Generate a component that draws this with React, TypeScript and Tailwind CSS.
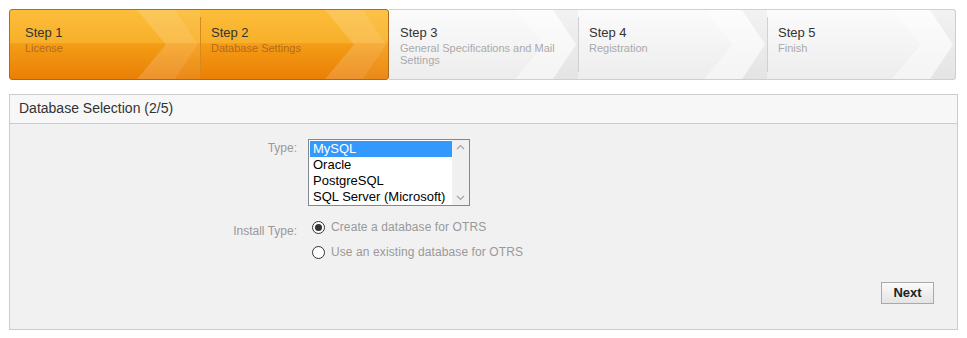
import React from "react";

const font = { fontFamily: '"Liberation Sans", Arial, sans-serif' };

function Chevrons({ orange }: { orange: boolean }) {
  return (
    <svg
      className="absolute right-0 top-0 h-full w-[63px]"
      viewBox="0 0 63 69"
      preserveAspectRatio="none"
    >
      <polygon
        points="0,0 38,0 61,34.5 38,69 0,69 29,34.5"
        fill={orange ? "rgba(255,255,255,0.16)" : "rgba(255,255,255,0.4)"}
      />
      <polygon
        points="38,0 63,0 63,69 38,69 61,34.5"
        fill={orange ? "rgba(255,255,255,0.08)" : "rgba(0,0,0,0.035)"}
      />
    </svg>
  );
}

function Step({
  n,
  label,
  orange,
  divider,
  pl,
  w,
}: {
  n: number;
  label: string;
  orange: boolean;
  divider: boolean;
  pl: string;
  w: string;
}) {
  return (
    <div className={`relative flex h-full ${w}`}>
      {divider && (
        <div
          className={`mt-[7px] h-[55px] w-px shrink-0 ${orange ? "bg-[#d8891e]" : "bg-[#d0d0d0]"}`}
        />
      )}
      <div className={`relative flex-1 overflow-hidden ${pl} pt-[15px]`}>
        <Chevrons orange={orange} />
        <div className="relative">
          <div className="text-[13px] leading-[16px] text-[#333]">Step {n}</div>
          <div
            className={`mt-px text-[11px] leading-[12px] ${orange ? "text-[#b8691a]" : "text-[#aaa]"}`}
          >
            {label}
          </div>
        </div>
      </div>
    </div>
  );
}

export default function App() {
  return (
    <div className="h-[338px] w-[967px] bg-white" style={font}>
      <div className="ml-[9px] flex h-[71px] w-[947px] translate-y-[9px]">
        <div className="flex h-[71px] w-[380px] overflow-hidden rounded-[3px] border border-[#b06a1e] bg-[linear-gradient(to_bottom,#fcbd3a_0%,#f8b02a_47%,#f49d16_49%,#ea7f05_100%)]">
          <Step n={1} label="License" orange divider={false} pl="pl-[15px]" w="w-[190px]" />
          <Step n={2} label="Database Settings" orange divider pl="pl-[10px]" w="w-[188px]" />
        </div>
        <div className="flex h-[71px] w-[567px] overflow-hidden rounded-r-[3px] border border-l-0 border-[#cfcfcf] bg-[linear-gradient(to_bottom,#fbfbfb,#ededed)]">
          <Step
            n={3}
            label="General Specifications and Mail Settings"
            orange={false}
            divider={false}
            pl="pl-[11px]"
            w="w-[189px]"
          />
          <Step n={4} label="Registration" orange={false} divider pl="pl-[10px]" w="w-[189px]" />
          <Step n={5} label="Finish" orange={false} divider pl="pl-[10px]" w="w-[188px]" />
        </div>
      </div>

      <div className="ml-[9px] mt-[23px] h-[236px] w-[949px] border border-[#cccccc] bg-[#f1f1f1]">
        <div className="h-[29px] border-b border-[#cccccc] bg-[#f7f7f7] pl-[9px] pt-[5px] text-[14px] leading-[17px] text-[#333]">
          Database Selection (2/5)
        </div>
        <div className="pt-[15px]">
          <div className="flex">
            <div className="w-[287px] pt-[2px] text-right text-[12px] leading-[14px] text-[#999]">
              Type:
            </div>
            <div className="ml-[11px] flex h-[67px] w-[162px] border border-[#828790] bg-white">
              <div className="flex-1 pl-px pt-px text-[13px] leading-[16px] text-black">
                <div className="bg-[#3399ff] pl-[3px] text-white">MySQL</div>
                <div className="pl-[3px]">Oracle</div>
                <div className="pl-[3px]">PostgreSQL</div>
                <div className="pl-[3px]">SQL Server (Microsoft)</div>
              </div>
              <div className="flex w-[17px] flex-col items-center justify-between bg-[#f0f0f0] py-[4px]">
                <svg width="9" height="6" viewBox="0 0 9 6">
                  <polyline points="1,5 4.5,1.5 8,5" fill="none" stroke="#a3a3a3" strokeWidth="1.2" />
                </svg>
                <svg width="9" height="6" viewBox="0 0 9 6">
                  <polyline points="1,1 4.5,4.5 8,1" fill="none" stroke="#a3a3a3" strokeWidth="1.2" />
                </svg>
              </div>
            </div>
          </div>

          <div className="mt-[14px] flex">
            <div className="w-[287px] pt-[4px] text-right text-[12px] leading-[14px] text-[#999]">
              Install Type:
            </div>
            <div className="ml-[15px] flex flex-col gap-[11px] text-[12px] leading-[14px] tracking-[0.1px] text-[#999]">
              <label className="flex items-center gap-[6px]">
                <span className="flex h-[13px] w-[13px] items-center justify-center rounded-full border border-[#333] bg-white">
                  <span className="h-[7px] w-[7px] rounded-full bg-[#333]" />
                </span>
                <span>Create a database for OTRS</span>
              </label>
              <label className="flex items-center gap-[6px]">
                <span className="h-[13px] w-[13px] rounded-full border border-[#333] bg-white" />
                <span>Use an existing database for OTRS</span>
              </label>
            </div>
          </div>

          <div className="mr-[23px] mt-[23px] flex justify-end">
            <button className="h-[22px] w-[53px] border border-[#a9a9a9] bg-[linear-gradient(to_bottom,#fafafa,#e4e4e4)] text-[13px] font-bold text-[#222]">
              Next
            </button>
          </div>
        </div>
      </div>
    </div>
  );
}
